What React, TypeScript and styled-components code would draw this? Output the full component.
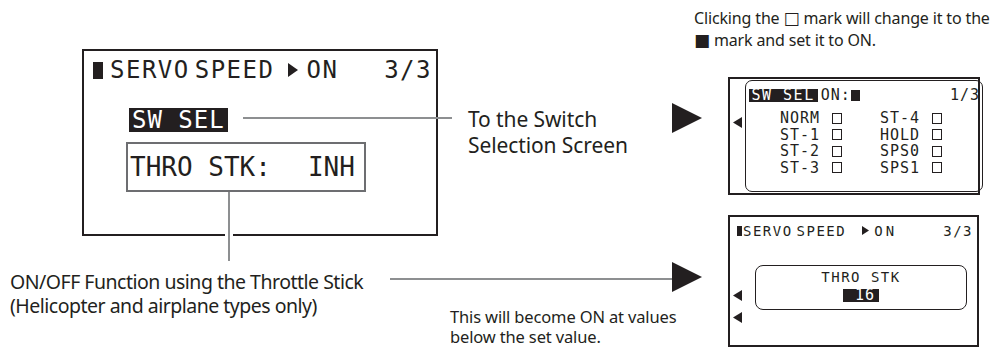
import React from "react";
import styled, { createGlobalStyle } from "styled-components";

const INK = "#231f20";
const LEADER = "#8d8f91";
const LCD = `"DejaVu Sans Mono", "Liberation Mono", monospace`;

const GlobalStyle = createGlobalStyle`
  html, body {
    margin: 0;
    padding: 0;
    background: #fff;
  }
  body {
    width: 1005px;
    height: 349px;
    overflow: hidden;
  }
`;

const Page = styled.div`
  width: 1005px;
  height: 349px;
  display: flex;
  font-family: "Noto Sans", "Open Sans", sans-serif;
  color: ${INK};
`;

const LeftArea = styled.div`
  width: 672px;
  display: flex;
  flex-direction: column;
`;

const RightArea = styled.div`
  flex: 1;
  display: flex;
  flex-direction: column;
  padding-top: 7px;
`;

/* ---------- big LCD screen ---------- */

const MainRow = styled.div`
  display: flex;
  align-items: flex-start;
  padding: 49px 0 0 82px;
`;

const MainScreen = styled.div`
  box-sizing: border-box;
  width: 356px;
  height: 187px;
  border: 2px solid ${INK};
  padding: 7px 4px 0 9px;
  display: flex;
  flex-direction: column;
  font-family: ${LCD};
`;

const TitleRow = styled.div<{ $size: number; $spacing: number }>`
  display: flex;
  align-items: center;
  font-size: ${(p) => p.$size}px;
  line-height: ${(p) => p.$size}px;
  height: ${(p) => p.$size}px;
  letter-spacing: ${(p) => p.$spacing}px;
  white-space: pre;
`;

const Block = styled.span<{ $w: number; $h: number; $gap: number }>`
  display: inline-block;
  width: ${(p) => p.$w}px;
  height: ${(p) => p.$h}px;
  background: ${INK};
  margin-right: ${(p) => p.$gap}px;
`;

const Word = styled.span<{ $gap?: number; $spacing?: number; $word?: number }>`
  margin-left: ${(p) => p.$gap ?? 0}px;
  ${(p) => (p.$spacing !== undefined ? `letter-spacing: ${p.$spacing}px;` : "")}
  ${(p) => (p.$word !== undefined ? `word-spacing: ${p.$word}px;` : "")}
  display: inline-flex;
  align-items: center;
`;

const PageNo = styled.span`
  margin-left: auto;
`;

const SwSel = styled.span`
  position: relative;
  align-self: flex-start;
  margin: 26px 0 0 36px;
  height: 24px;
  line-height: 24px;
  font-size: 24px;
  letter-spacing: 1px;
  padding: 0 3px;
  background: ${INK};
  color: #fff;
  white-space: pre;

  &::after {
    content: "";
    position: absolute;
    left: calc(100% + 15px);
    top: 9px;
    width: 209px;
    height: 2px;
    background: ${LEADER};
  }
`;

const ThroBox = styled.div`
  position: relative;
  box-sizing: border-box;
  margin: 10px 0 0 33px;
  width: 240px;
  height: 50px;
  border: 2px solid #6d6e71;
  padding-left: 2px;
  display: flex;
  align-items: center;
  font-size: 26px;
  white-space: pre;

  &::after {
    content: "";
    position: absolute;
    top: calc(100% + 2px);
    left: 97px;
    width: 2px;
    height: 69px;
    background: ${LEADER};
    border-left: 3px solid #fff;
    border-right: 3px solid #fff;
    background-clip: padding-box;
  }
`;

const SideLabel = styled.div`
  margin: 57px 0 0 30px;
  font-size: 21px;
  line-height: 26px;
  letter-spacing: -0.1px;
  white-space: nowrap;
`;

/* ---------- caption row ---------- */

const CaptionRow = styled.div`
  display: flex;
  margin-top: 34px;
`;

const Caption = styled.div`
  box-sizing: border-box;
  width: 390px;
  padding-left: 10px;
  font-size: 19.5px;
  line-height: 24px;
  letter-spacing: -0.5px;
  white-space: nowrap;
`;

const LeaderColumn = styled.div`
  width: 282px;
  display: flex;
  flex-direction: column;
`;

const LeaderLine = styled.div`
  margin-top: 8px;
  height: 2px;
  width: 282px;
  background: ${LEADER};
`;

const Note = styled.div<{ $size: number; $line: number }>`
  font-size: ${(p) => p.$size}px;
  line-height: ${(p) => p.$line}px;
  letter-spacing: -0.15px;
  white-space: nowrap;
`;

const BottomNote = styled(Note)`
  margin: 27px 0 0 60px;
`;

const TopNote = styled(Note)`
  margin-left: 22px;
`;

const Mark = styled.span`
  font-family: "DejaVu Sans", sans-serif;
  font-size: 17px;
  line-height: 1;
`;

/* ---------- right side small screens ---------- */

const ShotRow = styled.div<{ $top: number; $arrow: number }>`
  display: flex;
  align-items: flex-start;
  margin-top: ${(p) => p.$top}px;

  & > svg {
    margin-top: ${(p) => p.$arrow}px;
    margin-right: 26px;
    flex: none;
  }
`;

const SmallScreen = styled.div<{ $w: number; $h: number }>`
  box-sizing: border-box;
  width: ${(p) => p.$w}px;
  height: ${(p) => p.$h}px;
  border: 2px solid ${INK};
  font-family: ${LCD};
  display: flex;
`;

const Gutter = styled.div<{ $w: number; $top: number }>`
  width: ${(p) => p.$w}px;
  flex: none;
  display: flex;
  flex-direction: column;
  gap: 11px;
  padding: ${(p) => p.$top}px 0 0 3px;
  box-sizing: border-box;
`;

const RoundBox = styled.div`
  box-sizing: border-box;
  border: 1.5px solid ${INK};
  border-radius: 7px;
`;

const SelBox = styled(RoundBox)`
  flex: 1;
  margin: 1px 5px 1px 0;
  padding: 7.5px 1.5px 0 2.5px;
  display: flex;
  flex-direction: column;
  font-size: 15px;
`;

const SelHeader = styled.div`
  display: flex;
  align-items: center;
  height: 13px;
  line-height: 13px;
  letter-spacing: 1px;
  white-space: pre;
`;

const Inverse = styled.span<{ $w?: number }>`
  display: inline-block;
  background: ${INK};
  color: #fff;
  padding: 0 3px;
  letter-spacing: 1.5px;
  width: ${(p) => (p.$w ? `${p.$w}px` : "auto")};
  text-align: right;
  box-sizing: border-box;
`;

const SwitchGrid = styled.div`
  display: grid;
  grid-template-columns: 100px 100px;
  grid-auto-rows: 16.5px;
  margin: 8.5px 0 0 31.5px;
  letter-spacing: 1px;
  line-height: 16.5px;
`;

const SwitchCell = styled.div`
  display: flex;
  align-items: center;
`;

const SwitchName = styled.span`
  width: 54px;
  white-space: pre;
`;

const Check = styled.span`
  box-sizing: border-box;
  width: 10px;
  height: 11px;
  border: 1.5px solid ${INK};
  margin-left: -2px;
`;

const SpeedScreen = styled(SmallScreen)`
  flex-direction: column;
  padding: 6.5px 4px 0 7px;
`;

const SpeedBody = styled.div`
  display: flex;
  margin: 27px 0 0 -7px;
`;

const ValueBox = styled(RoundBox)`
  width: 212px;
  height: 45px;
  border-radius: 8px;
  padding-top: 4px;
  display: flex;
  flex-direction: column;
  align-items: center;
  font-size: 14px;
  line-height: 14px;
  letter-spacing: 1.5px;
  white-space: pre;
`;

const ValueCell = styled(Inverse)`
  margin-top: 5.5px;
  height: 13px;
  line-height: 13px;
  padding: 0 4px;
  letter-spacing: 1px;
  font-size: 15px;
`;

const BigArrow = () => (
  <svg width="30" height="30" viewBox="0 0 30 30">
    <polygon points="0,0 30,15 0,30" fill={INK} />
  </svg>
);

const LeftTick = () => (
  <svg width="10" height="11" viewBox="0 0 10 11">
    <polygon points="9,0 0,5.5 9,11" fill={INK} />
  </svg>
);

const RightTick = ({ w, h }: { w: number; h: number }) => (
  <svg width={w} height={h} viewBox={`0 0 ${w} ${h}`}>
    <polygon points={`0,0 ${w},${h / 2} 0,${h}`} fill={INK} />
  </svg>
);

const switches = [
  ["NORM", "ST-4"],
  ["ST-1", "HOLD"],
  ["ST-2", "SPS0"],
  ["ST-3", "SPS1"],
];

export default function App() {
  return (
    <Page>
      <GlobalStyle />
      <LeftArea>
        <MainRow>
          <MainScreen>
            <TitleRow $size={24} $spacing={1.5}>
              <Block $w={10} $h={17} $gap={7} />
              <Word $word={-11}>SERVO SPEED</Word>
              <Word $gap={14}>
                <RightTick w={10} h={14} />
              </Word>
              <Word $gap={8}>ON</Word>
              <PageNo>3/3</PageNo>
            </TitleRow>
            <SwSel>SW SEL</SwSel>
            <ThroBox>
              <span>THRO STK:</span>
              <Word $gap={37}>INH</Word>
            </ThroBox>
          </MainScreen>
          <SideLabel>
            To the Switch
            <br />
            Selection Screen
          </SideLabel>
        </MainRow>

        <CaptionRow>
          <Caption>
            ON/OFF Function using the Throttle Stick
            <br />
            (Helicopter and airplane types only)
          </Caption>
          <LeaderColumn>
            <LeaderLine />
            <BottomNote $size={16.5} $line={20}>
              This will become ON at values
              <br />
              below the set value.
            </BottomNote>
          </LeaderColumn>
        </CaptionRow>
      </LeftArea>

      <RightArea>
        <TopNote $size={16} $line={22}>
          Clicking the <Mark>□</Mark> mark will change it to the
          <br />
          <Mark>■</Mark> mark and set it to ON.
        </TopNote>

        <ShotRow $top={26} $arrow={26}>
          <BigArrow />
          <SmallScreen $w={252} $h={118}>
            <Gutter $w={15} $top={38}>
              <LeftTick />
            </Gutter>
            <SelBox>
              <SelHeader>
                <Inverse>SW SEL</Inverse>
                <Word $gap={3}>ON:</Word>
                <Block $w={9} $h={11} $gap={0} />
                <PageNo>1/3</PageNo>
              </SelHeader>
              <SwitchGrid>
                {switches.map(([a, b]) => (
                  <React.Fragment key={a}>
                    <SwitchCell>
                      <SwitchName>{a}</SwitchName>
                      <Check />
                    </SwitchCell>
                    <SwitchCell>
                      <SwitchName>{b}</SwitchName>
                      <Check />
                    </SwitchCell>
                  </React.Fragment>
                ))}
              </SwitchGrid>
            </SelBox>
          </SmallScreen>
        </ShotRow>

        <ShotRow $top={20} $arrow={47}>
          <BigArrow />
          <SpeedScreen $w={251} $h={132}>
            <TitleRow $size={14} $spacing={1.5}>
              <Block $w={5} $h={10} $gap={1} />
              <Word $word={-6}>SERVO SPEED</Word>
              <Word $gap={16}>
                <RightTick w={7} h={9} />
              </Word>
              <Word $gap={5} $spacing={3}>ON</Word>
              <PageNo>3/3</PageNo>
            </TitleRow>
            <SpeedBody>
              <Gutter $w={25} $top={25}>
                <LeftTick />
                <LeftTick />
              </Gutter>
              <ValueBox>
                <span>THRO STK</span>
                <ValueCell $w={36}>16</ValueCell>
              </ValueBox>
            </SpeedBody>
          </SpeedScreen>
        </ShotRow>
      </RightArea>
    </Page>
  );
}
